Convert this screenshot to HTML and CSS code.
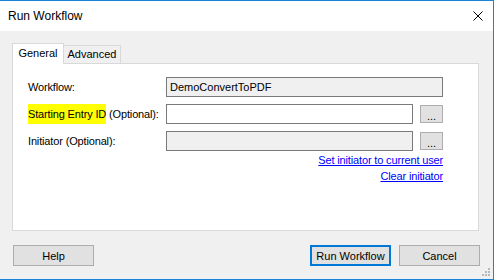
FILE: index.html
```html
<!DOCTYPE html>
<html lang="en">
<head>
  <meta charset="UTF-8">
  <title>Run Workflow</title>
  <link rel="stylesheet" href="styles.css">
</head>
<body>

  <div class="window">
    <!-- Title bar -->
    <div class="titlebar">
      <span class="title">Run Workflow</span>
      <svg class="close-icon" width="10" height="10" viewBox="0 0 10 10">
        <path d="M0.5 0.5 L9.5 9.5 M9.5 0.5 L0.5 9.5" stroke="#000" stroke-width="1" fill="none"/>
      </svg>
    </div>

    <div class="content">
      <!-- Tabs -->
      <div class="tabs">
        <div class="tab active">General</div>
        <div class="tab">Advanced</div>
      </div>

      <div class="panel">
        <div class="form-grid">
          <label class="field-label">Workflow:</label>
          <input class="field wide disabled" type="text" value="DemoConvertToPDF" readonly>

          <label class="field-label"><span class="marked">Starting Entry ID</span> (Optional):</label>
          <input class="field" type="text">
          <button class="browse-btn">...</button>

          <label class="field-label">Initiator (Optional):</label>
          <input class="field disabled" type="text" readonly>
          <button class="browse-btn">...</button>
        </div>

        <div class="links">
          <a href="#" class="link">Set initiator to current user</a>
          <a href="#" class="link">Clear initiator</a>
        </div>
      </div>
    </div>

    <!-- Dialog buttons -->
    <div class="footer">
      <button class="dialog-btn">Help</button>
      <div class="footer-right">
        <button class="dialog-btn default">Run Workflow</button>
        <button class="dialog-btn">Cancel</button>
      </div>
    </div>

    <svg class="size-grip" width="10" height="10" viewBox="0 0 10 10">
      <rect x="6" y="0" width="2" height="2" fill="#b8b8b8"/>
      <rect x="3" y="3" width="2" height="2" fill="#b8b8b8"/>
      <rect x="6" y="3" width="2" height="2" fill="#b8b8b8"/>
      <rect x="0" y="6" width="2" height="2" fill="#b8b8b8"/>
      <rect x="3" y="6" width="2" height="2" fill="#b8b8b8"/>
      <rect x="6" y="6" width="2" height="2" fill="#b8b8b8"/>
    </svg>
  </div>

</body>
</html>
```

FILE: styles.css
```css
body {
  margin: 0;
  font-family: 'Liberation Sans', Arial, sans-serif;
  font-size: 11px;
  color: #000;
  background: #f0f0f0;
}

.window {
  box-sizing: border-box;
  width: 494px;
  height: 280px;
  border-top: 1px solid #1883d7;
  border-right: 1px solid #1883d7;
  border-bottom: 1px solid #1883d7;
  background-color: #f0f0f0;
  display: flex;
  flex-direction: column;
  position: relative;
}

.titlebar {
  height: 30px;
  background-color: #fff;
  display: flex;
  align-items: center;
  justify-content: space-between;
  padding: 0 10px 0 8px;
}

.title {
  font-size: 12px;
}

.content {
  padding: 12px 14px 0 12px;
}

.tabs {
  display: flex;
  align-items: flex-end;
}

.tab {
  box-sizing: border-box;
  width: 57px;
  height: 18px;
  line-height: 17px;
  text-align: center;
  background-color: #f0f0f0;
  border: 1px solid #d9d9d9;
  border-left: none;
  border-bottom: none;
}

.tab.active {
  width: 52px;
  height: 21px;
  line-height: 18px;
  background-color: #fff;
  border-left: 1px solid #d9d9d9;
  margin-bottom: -1px;
  position: relative;
  z-index: 1;
}

.panel {
  box-sizing: border-box;
  height: 168px;
  background-color: #fff;
  border: 1px solid #d9d9d9;
  padding: 13px 34px 0 15px;
}

.form-grid {
  display: grid;
  grid-template-columns: 131px 247px 23px;
  grid-auto-rows: 20px;
  column-gap: 7px;
  row-gap: 7px;
  align-items: center;
}

.field-label {
  line-height: 20px;
  white-space: nowrap;
  letter-spacing: -0.15px;
}

.marked {
  display: inline-block;
  background-color: #ffff00;
  line-height: 20px;
}

.field {
  box-sizing: border-box;
  width: 100%;
  height: 20px;
  margin: 0;
  padding: 0 3px;
  font-family: 'Liberation Sans', Arial, sans-serif;
  font-size: 11px;
  color: #000;
  background-color: #fff;
  border: 1px solid #7a7a7a;
  border-radius: 0;
  outline: none;
}

.field.wide {
  grid-column: 2 / 4;
}

.field.disabled {
  background-color: #f0f0f0;
}

.browse-btn {
  box-sizing: border-box;
  width: 23px;
  height: 18px;
  margin: 0;
  padding: 3px 0 0;
  font-family: 'Liberation Sans', Arial, sans-serif;
  font-size: 11px;
  line-height: 12px;
  color: #000;
  background-color: #e1e1e1;
  border: 1px solid #adadad;
  border-radius: 0;
}

.links {
  display: flex;
  flex-direction: column;
  align-items: flex-end;
  gap: 3px;
  margin-top: 3px;
  width: 415px;
}

.link {
  color: #0000ff;
  text-decoration: underline;
  line-height: 13px;
  letter-spacing: -0.15px;
}

.footer {
  display: flex;
  justify-content: space-between;
  padding: 14px 13px 0 13px;
}

.footer-right {
  display: flex;
  gap: 8px;
}

.dialog-btn {
  box-sizing: border-box;
  width: 81px;
  height: 21px;
  margin: 0;
  padding: 0;
  font-family: 'Liberation Sans', Arial, sans-serif;
  font-size: 11px;
  color: #000;
  background-color: #e1e1e1;
  border: 1px solid #adadad;
  border-radius: 0;
}

.dialog-btn.default {
  border: 2px solid #0078d7;
}

.size-grip {
  position: absolute;
  right: 1px;
  bottom: 1px;
}
```
